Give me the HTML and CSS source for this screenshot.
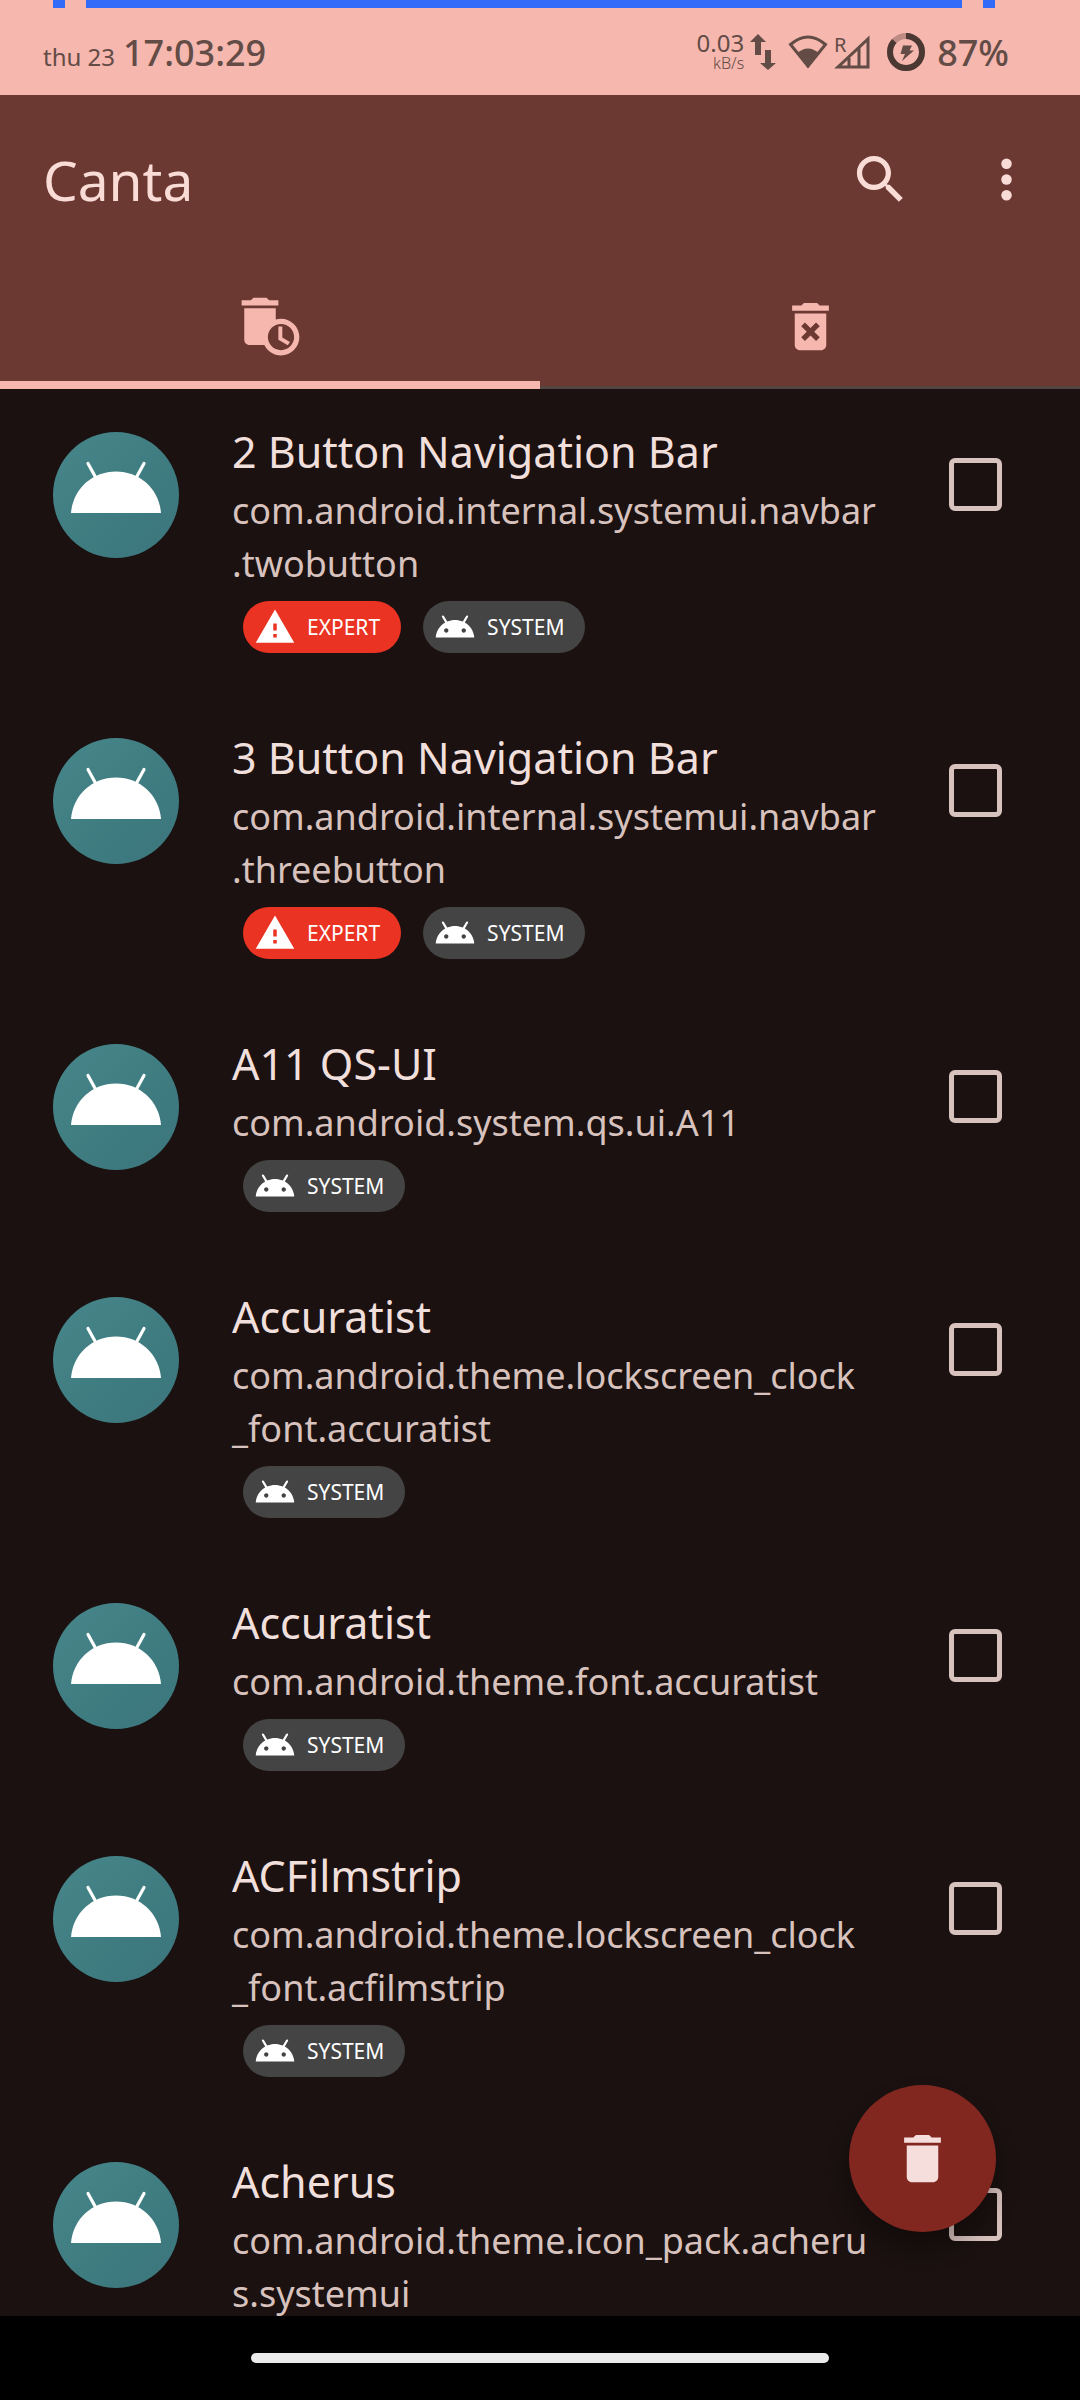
FILE: index.html
```html
<!DOCTYPE html>
<html lang="en">
<head>
<meta charset="utf-8">
<meta name="viewport" content="width=device-width, initial-scale=1">
<title>Canta</title>
<link rel="stylesheet" href="styles.css">
</head>
<body>
<svg class="sprite" aria-hidden="true">
  <defs>
    <linearGradient id="teal" x1="0" y1="0" x2="1" y2="1">
      <stop offset="0.1" stop-color="#458488"/>
      <stop offset="0.8" stop-color="#3c787d"/>
    </linearGradient>
  </defs>
  <symbol id="app-icon" viewBox="0 0 126 126">
    <circle cx="63" cy="63" r="63" fill="url(#teal)"/>
    <path d="M18 81C20 57 39 39.500 63 39.500S106 57 108 81z" fill="#fff"/>
    <path d="M35 31.500L43 46M91 31.500L83 46" stroke="#fff" stroke-width="3.200" stroke-linecap="round"/>
  </symbol>
  <symbol id="android" viewBox="0 0 24 24">
    <path d="M17.6 9.48l1.84-3.18c.16-.31.04-.69-.26-.85-.29-.15-.65-.06-.83.22l-1.88 3.24c-2.86-1.21-6.08-1.21-8.94 0L5.65 5.67c-.19-.29-.58-.38-.87-.2-.28.18-.37.54-.22.83L6.4 9.480C3.300 11.250 1.280 14.440 1 18h22c-.28-3.560-2.300-6.750-5.400-8.520zM7 15.250c-.69 0-1.250-.56-1.250-1.250s.56-1.250 1.250-1.250 1.250.56 1.250 1.250-.56 1.250-1.250 1.250zm10 0c-.69 0-1.250-.56-1.250-1.250s.56-1.250 1.250-1.250 1.250.56 1.250 1.250-.56 1.250-1.250 1.250z"/>
  </symbol>
  <symbol id="warning" viewBox="0 0 24 24">
    <path d="M1 21h22L12 2 1 21zm12-3h-2v-2h2v2zm0-4h-2v-4h2v4z"/>
  </symbol>
</svg>

<div class="screen">
  <header class="status-bar">
    <div class="cutout"><span class="mark"></span><span class="mark wide"></span><span class="mark"></span></div>
    <div class="status-row">
      <div class="clock"><span class="date">thu 23</span><time class="time">17:03:29</time></div>
      <div class="indicators">
        <div class="network"><span class="rate">0.03</span><span class="unit">kB/s</span></div>
        <svg class="arrows" viewBox="0 0 26 36"><path d="M8 0L16 8H11V21H5V8H0zM18 36L10 29H15V16H21V29H26z"/></svg>
        <svg class="wifi" viewBox="0 0 40 34"><path d="M2.500 9.500Q20-5.500 37.500 9.500L20 31z" fill="none" stroke="currentColor" stroke-width="3"/><path d="M9 18.500Q20 8.500 31 18.500L20 33z"/></svg>
        <svg class="signal" viewBox="0 0 36 34"><text class="roaming" x="0" y="17">R</text><path d="M4 32H34V4zM15 32V23M25 32V13" fill="none" stroke="currentColor" stroke-width="3"/></svg>
        <svg class="battery" viewBox="0 0 38 38"><circle cx="19" cy="19" r="16" fill="none" stroke="#bd8b84" stroke-width="6"/><circle cx="19" cy="19" r="16" fill="none" stroke="#4b3833" stroke-width="6" pathLength="100" stroke-dasharray="87 13" transform="rotate(-90 19 19)"/><path d="M16 12.500H25L22.500 17.500H27L15 28L18 21H13.500z"/></svg>
        <span class="percent">87%</span>
      </div>
    </div>
  </header>

  <div class="app-bar">
    <h1 class="app-title">Canta</h1>
    <button class="icon-button" type="button" aria-label="Search">
      <svg class="icon" viewBox="0 0 24 24"><path d="M15.500 14h-.79l-.28-.27C15.410 12.590 16 11.110 16 9.500 16 5.910 13.090 3 9.500 3S3 5.910 3 9.500 5.910 16 9.500 16c1.610 0 3.090-.59 4.230-1.570l.27.28v.79l5 4.990L20.490 19l-4.990-5zm-6 0C7.010 14 5 11.990 5 9.500S7.010 5 9.500 5 14 7.010 14 9.500 11.990 14 9.500 14z"/></svg>
    </button>
    <button class="icon-button" type="button" aria-label="More options">
      <svg class="icon" viewBox="0 0 24 24"><circle cx="12" cy="6" r="2"/><circle cx="12" cy="12" r="2"/><circle cx="12" cy="18" r="2"/></svg>
    </button>
  </div>

  <div class="tabs" role="tablist">
    <button class="tab selected" type="button" role="tab" aria-selected="true" aria-label="Installed apps">
      <svg class="icon" viewBox="0 0 24 24"><path fill-rule="evenodd" d="M15 2h-3.500l-1-1h-5l-1 1H1v2h14zM16 9c-.7 0-1.370.1-2 .29V5H2v12c0 1.100.9 2 2 2h5.680c1.120 2.360 3.530 4 6.320 4 3.870 0 7-3.130 7-7s-3.130-7-7-7zm0 12c-2.760 0-5-2.240-5-5s2.240-5 5-5 5 2.240 5 5-2.240 5-5 5z"/><path d="M16.500 12H15v5l3.600 2.100.8-1.200-2.900-1.700z"/></svg>
    </button>
    <button class="tab" type="button" role="tab" aria-selected="false" aria-label="Uninstalled apps">
      <svg class="icon" viewBox="0 0 24 24"><path d="M6 19c0 1.100.9 2 2 2h8c1.100 0 2-.9 2-2V7H6v12zm2.460-7.120l1.410-1.410L12 12.590l2.120-2.120 1.410 1.410L13.410 14l2.120 2.120-1.410 1.410L12 15.410l-2.120 2.120-1.410-1.410L10.590 14l-2.130-2.120zM15.500 4l-1-1h-5l-1 1H5v2h14V4z"/></svg>
    </button>
  </div>

  <main class="content">
    <ul class="app-list">
      <li class="app-row">
        <svg class="app-icon"><use href="#app-icon"/></svg>
        <div class="app-info">
          <label class="app-name" for="app1">2 Button Navigation Bar</label>
          <p class="package">com.android.internal.systemui.navbar<wbr>.twobutton</p>
          <div class="tags">
            <span class="tag expert"><svg class="tag-icon"><use href="#warning"/></svg>EXPERT</span>
            <span class="tag"><svg class="tag-icon"><use href="#android"/></svg>SYSTEM</span>
          </div>
        </div>
        <input class="check" type="checkbox" id="app1">
      </li>
      <li class="app-row">
        <svg class="app-icon"><use href="#app-icon"/></svg>
        <div class="app-info">
          <label class="app-name" for="app2">3 Button Navigation Bar</label>
          <p class="package">com.android.internal.systemui.navbar<wbr>.threebutton</p>
          <div class="tags">
            <span class="tag expert"><svg class="tag-icon"><use href="#warning"/></svg>EXPERT</span>
            <span class="tag"><svg class="tag-icon"><use href="#android"/></svg>SYSTEM</span>
          </div>
        </div>
        <input class="check" type="checkbox" id="app2">
      </li>
      <li class="app-row">
        <svg class="app-icon"><use href="#app-icon"/></svg>
        <div class="app-info">
          <label class="app-name" for="app3">A11 QS-UI</label>
          <p class="package">com.android.system.qs.ui.A11</p>
          <div class="tags">
            <span class="tag"><svg class="tag-icon"><use href="#android"/></svg>SYSTEM</span>
          </div>
        </div>
        <input class="check" type="checkbox" id="app3">
      </li>
      <li class="app-row">
        <svg class="app-icon"><use href="#app-icon"/></svg>
        <div class="app-info">
          <label class="app-name" for="app4">Accuratist</label>
          <p class="package">com.android.theme.lockscreen_clock<wbr>_font.accuratist</p>
          <div class="tags">
            <span class="tag"><svg class="tag-icon"><use href="#android"/></svg>SYSTEM</span>
          </div>
        </div>
        <input class="check" type="checkbox" id="app4">
      </li>
      <li class="app-row">
        <svg class="app-icon"><use href="#app-icon"/></svg>
        <div class="app-info">
          <label class="app-name" for="app5">Accuratist</label>
          <p class="package">com.android.theme.font.accuratist</p>
          <div class="tags">
            <span class="tag"><svg class="tag-icon"><use href="#android"/></svg>SYSTEM</span>
          </div>
        </div>
        <input class="check" type="checkbox" id="app5">
      </li>
      <li class="app-row">
        <svg class="app-icon"><use href="#app-icon"/></svg>
        <div class="app-info">
          <label class="app-name" for="app6">ACFilmstrip</label>
          <p class="package">com.android.theme.lockscreen_clock<wbr>_font.acfilmstrip</p>
          <div class="tags">
            <span class="tag"><svg class="tag-icon"><use href="#android"/></svg>SYSTEM</span>
          </div>
        </div>
        <input class="check" type="checkbox" id="app6">
      </li>
      <li class="app-row">
        <svg class="app-icon"><use href="#app-icon"/></svg>
        <div class="app-info">
          <label class="app-name" for="app7">Acherus</label>
          <p class="package">com.android.theme.icon_pack.acheru<wbr>s.systemui</p>
        </div>
        <input class="check" type="checkbox" id="app7">
      </li>
    </ul>
    <button class="fab" type="button" aria-label="Uninstall selected">
      <svg class="icon" viewBox="0 0 24 24"><path d="M6 19c0 1.100.9 2 2 2h8c1.100 0 2-.9 2-2V7H6v12zM19 4h-3.500l-1-1h-5l-1 1H5v2h14V4z"/></svg>
    </button>
  </main>

  <footer class="nav-bar"><span class="nav-pill"></span></footer>
</div>
</body>
</html>
```
FILE: styles.css
```css
* {
  box-sizing: border-box;
}

body {
  margin: 0;
  background: #000;
  font-family: "Noto Sans", "Open Sans", sans-serif;
}

button {
  padding: 0;
  border: 0;
  background: none;
  color: inherit;
  font: inherit;
}

svg {
  display: block;
  flex: none;
  fill: currentColor;
}

.sprite {
  position: absolute;
  width: 0;
  height: 0;
}

.screen {
  display: flex;
  flex-direction: column;
  height: 100vh;
}

/* Status bar */
.status-bar {
  flex: none;
  height: 95px;
  background: #f5b7ae;
  color: #634b46;
}

.cutout {
  display: flex;
  gap: 21px;
  height: 8px;
  padding: 0 85px 0 53px;
}

.mark {
  width: 12px;
  background: #316bf8;
}

.mark.wide {
  flex: 1;
}

.status-row {
  display: flex;
  justify-content: space-between;
  align-items: center;
  height: 88px;
  padding: 0 71px 0 43px;
}

.clock {
  display: flex;
  align-items: baseline;
  gap: 8px;
}

.date {
  font-size: 24px;
}

.time,
.percent {
  font-size: 36px;
  font-weight: 500;
}

.indicators {
  display: flex;
  align-items: center;
}

.network {
  display: flex;
  flex-direction: column;
  align-items: flex-end;
  margin-right: 6px;
}

.rate {
  font-size: 24px;
  line-height: 22px;
}

.unit {
  font-size: 16px;
  font-weight: 300;
  line-height: 18px;
}

.arrows {
  width: 26px;
  height: 36px;
  margin-right: 12px;
}

.wifi {
  width: 40px;
  height: 34px;
  margin-right: 6px;
}

.signal {
  width: 36px;
  height: 34px;
  margin-right: 17px;
  overflow: visible;
}

.roaming {
  font-size: 20px;
}

.battery {
  width: 38px;
  height: 38px;
  margin-right: 12px;
}

/* App bar and tabs */
.app-bar {
  display: flex;
  flex: none;
  align-items: center;
  height: 168px;
  padding: 0 11px 0 43px;
  background: #6b3832;
  color: #fadcd7;
}

.app-title {
  flex: 1;
  margin: 0;
  font-size: 55px;
  font-weight: 400;
}

.icon-button {
  display: grid;
  place-items: center;
  width: 126px;
  height: 126px;
}

.icon {
  width: 63px;
  height: 63px;
}

.tabs {
  display: flex;
  flex: none;
  height: 126px;
  background: #6b3832;
  color: #f5b7ae;
}

.tab {
  display: grid;
  flex: 1;
  place-items: center;
  box-shadow: inset 0 -3px #534540;
}

.tab.selected {
  box-shadow: inset 0 -8px #f5b7ae;
}

/* App list */
.content {
  position: relative;
  flex: 1;
  min-height: 0;
  background: #1a1110;
}

.app-list {
  height: 100%;
  margin: 0;
  padding: 0;
  overflow: hidden;
  list-style: none;
}

.app-row {
  display: flex;
  align-items: flex-start;
  padding: 30px 78px 42px 53px;
}

.app-icon {
  width: 126px;
  height: 126px;
  margin: 13px 53px 0 0;
}

.app-info {
  flex: 1;
  min-width: 0;
}

.app-name {
  display: block;
  color: #f1dfdc;
  font-size: 43px;
  line-height: 65px;
}

.package {
  margin: 0;
  color: #d8c2be;
  font-size: 36px;
  line-height: 53px;
}

.tags {
  display: flex;
  gap: 22px;
  margin: 11px 0 0 11px;
}

.tag {
  display: flex;
  align-items: center;
  gap: 11px;
  height: 52px;
  padding: 0 21px 0 11px;
  border-radius: 26px;
  background: #444;
  color: #fff;
  font-size: 21px;
}

.tag.expert {
  background: #eb3323;
}

.tag-icon {
  width: 42px;
  height: 42px;
}

.check {
  flex: none;
  width: 53px;
  height: 53px;
  margin: 39px 0 0 60px;
  border: 5px solid #d8c2be;
  border-radius: 6px;
  appearance: none;
}

.check:checked {
  background: #f5b7ae;
}

.fab {
  position: absolute;
  right: 84px;
  bottom: 84px;
  display: grid;
  place-items: center;
  width: 147px;
  height: 147px;
  border-radius: 50%;
  background: #81271f;
  color: #f5dedb;
  box-shadow: 0 16px 24px rgba(0, 0, 0, 0.3);
}

/* Gesture navigation */
.nav-bar {
  display: grid;
  flex: none;
  place-items: center;
  height: 84px;
  background: #000;
}

.nav-pill {
  width: 578px;
  max-width: 60%;
  height: 10px;
  border-radius: 5px;
  background: #ebebeb;
}
```
